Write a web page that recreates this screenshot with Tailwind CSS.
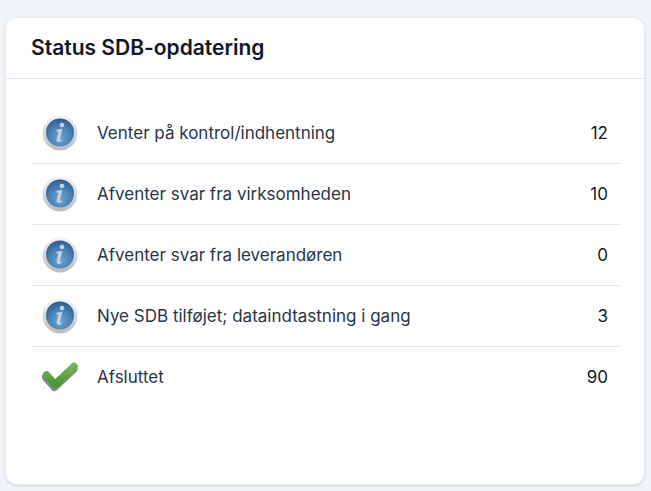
<!DOCTYPE html>
<html lang="en">
<head>
    <meta charset="UTF-8">
    <meta name="viewport" content="width=device-width, initial-scale=1.0">
    <title>Status SDB-opdatering</title>
    <script src="https://cdn.jsdelivr.net/npm/@tailwindcss/browser@4"></script>
</head>
<body class="bg-[#f1f5f9] h-[491px] overflow-hidden font-['Inter',sans-serif]">
    <svg width="0" height="0" class="absolute">
        <defs>
            <radialGradient id="info-fill" cx="50%" cy="70%" r="70%">
                <stop offset="0%" stop-color="#6ea3d1"/>
                <stop offset="55%" stop-color="#4a82b7"/>
                <stop offset="100%" stop-color="#2c5c92"/>
            </radialGradient>
            <linearGradient id="info-rim" x1="0" y1="0" x2="0" y2="1">
                <stop offset="0%" stop-color="#f4f4f4"/>
                <stop offset="100%" stop-color="#bcbcbc"/>
            </linearGradient>
            <linearGradient id="check-fill" x1="0" y1="0" x2="0" y2="1">
                <stop offset="0%" stop-color="#70b552"/>
                <stop offset="100%" stop-color="#4a9539"/>
            </linearGradient>
            <symbol id="info" viewBox="0 0 36 36">
                <circle cx="18" cy="18" r="17.5" fill="url(#info-rim)"/>
                <circle cx="18" cy="17.5" r="14" fill="url(#info-fill)"/>
                <circle cx="20" cy="10" r="2.3" fill="#c3d2e0"/>
                <path d="M14.5 14.8 L20.5 13.8 L18 24 Q17.7 25.6 20 24.5 L19.6 26 Q14.4 28.4 14.6 24.5 L16.3 16.8 L14.3 16.4 Z" fill="#c3d2e0"/>
            </symbol>
            <symbol id="check" viewBox="0 0 36 30">
                <path d="M4.5 14 L13 23.5 L32 5.5" fill="none" stroke="#8a8a8a" stroke-width="8" stroke-linejoin="round" stroke-linecap="round" transform="translate(-0.5 1.5)"/>
                <path d="M4.5 13 L13 22.5 L32 4.5" fill="none" stroke="url(#check-fill)" stroke-width="7.5" stroke-linejoin="round" stroke-linecap="round"/>
            </symbol>
        </defs>
    </svg>

    <div class="pt-[17px] pl-[5px] pr-[6px]">
        <!-- Card -->
        <div class="bg-white rounded-xl border border-[#e8edf3] shadow-sm h-[468px]">
            <header class="h-[61px] flex items-center pl-[25px] pr-6 border-b border-[#e2e8f0]">
                <h1 class="text-[21px] font-semibold text-[#0f172a]">Status SDB-opdatering</h1>
            </header>

            <div class="pt-6 pl-[25px] pr-6 text-[17px]">
                <div class="h-[61px] flex items-center border-b border-[#e2e5e9] pl-[11px] pr-3">
                    <svg class="w-9 h-9 shrink-0 blur-[0.5px]"><use href="#info"/></svg>
                    <span class="ml-[19px] mt-[2px] flex-1 text-[#283548]">Venter på kontrol/indhentning</span>
                    <span class="mt-[2px] text-[#111827]">12</span>
                </div>
                <div class="h-[61px] flex items-center border-b border-[#e2e5e9] pl-[11px] pr-3">
                    <svg class="w-9 h-9 shrink-0 blur-[0.5px]"><use href="#info"/></svg>
                    <span class="ml-[19px] mt-[2px] flex-1 text-[#283548]">Afventer svar fra virksomheden</span>
                    <span class="mt-[2px] text-[#111827]">10</span>
                </div>
                <div class="h-[61px] flex items-center border-b border-[#e2e5e9] pl-[11px] pr-3">
                    <svg class="w-9 h-9 shrink-0 blur-[0.5px]"><use href="#info"/></svg>
                    <span class="ml-[19px] mt-[2px] flex-1 text-[#283548]">Afventer svar fra leverandøren</span>
                    <span class="mt-[2px] text-[#111827]">0</span>
                </div>
                <div class="h-[61px] flex items-center border-b border-[#e2e5e9] pl-[11px] pr-3">
                    <svg class="w-9 h-9 shrink-0 blur-[0.5px]"><use href="#info"/></svg>
                    <span class="ml-[19px] mt-[2px] flex-1 text-[#283548]">Nye SDB tilføjet; dataindtastning i gang</span>
                    <span class="mt-[2px] text-[#111827]">3</span>
                </div>
                <div class="h-[59px] flex items-center pl-[11px] pr-3">
                    <svg class="w-9 h-[30px] shrink-0 blur-[0.5px]"><use href="#check"/></svg>
                    <span class="ml-[19px] mt-[2px] flex-1 text-[#283548]">Afsluttet</span>
                    <span class="mt-[2px] text-[#111827]">90</span>
                </div>
            </div>
        </div>
    </div>
</body>
</html>
